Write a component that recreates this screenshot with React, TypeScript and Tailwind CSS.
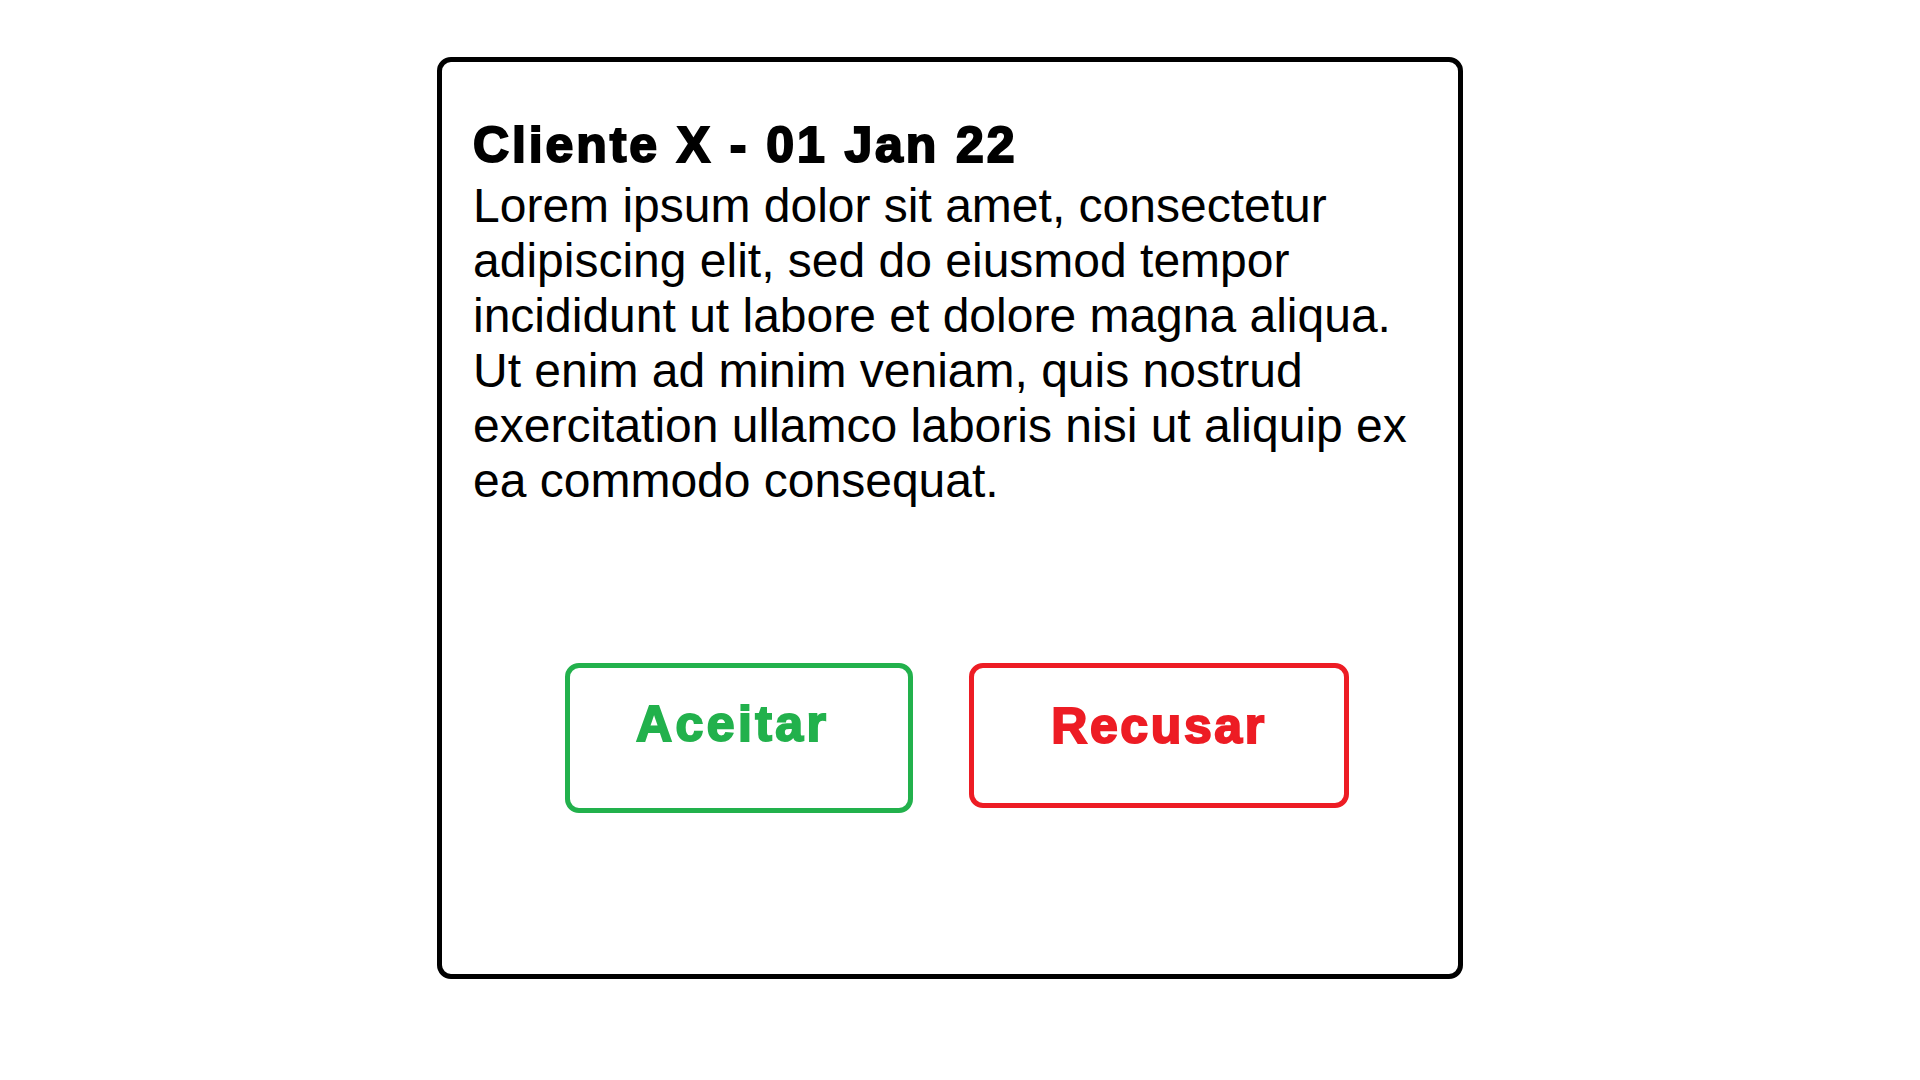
import React from 'react';

const App: React.FC = () => {
  return (
    <div className="min-h-screen w-full bg-white font-['Liberation_Sans',Arial,sans-serif] text-black overflow-hidden">
      <div className="pt-[57px] pl-[437px]">
        {/* Card */}
        <div className="w-[1026px] h-[922px] border-[5px] border-black rounded-[14px] pl-[31px] pt-[55px]">
          <h1 className="text-[50px] leading-[57px] font-bold tracking-[2.9px] [-webkit-text-stroke:2px_currentColor]">
            Cliente X - 01 Jan 22
          </h1>
          <p className="mt-[4px] w-[945px] text-[48px] leading-[55px]">
            Lorem ipsum dolor sit amet, consectetur adipiscing elit, sed do eiusmod tempor incididunt ut labore et dolore magna aliqua. Ut enim ad minim veniam, quis nostrud exercitation ullamco laboris nisi ut aliquip ex ea commodo consequat.
          </p>

          {/* Actions */}
          <div className="mt-[155px] ml-[92px] flex items-start gap-[56px]">
            <button className="w-[348px] h-[150px] border-[5px] border-[#22b14c] rounded-[14px] flex items-start pl-[66px] pt-[28px]">
              <span className="text-[50px] leading-[57px] font-bold tracking-[3.4px] text-[#22b14c] [-webkit-text-stroke:2px_currentColor]">
                Aceitar
              </span>
            </button>
            <button className="w-[380px] h-[145px] border-[5px] border-[#ed1c24] rounded-[14px] flex items-start justify-center pt-[30px]">
              <span className="text-[50px] leading-[57px] font-bold tracking-[2.6px] text-[#ed1c24] [-webkit-text-stroke:2px_currentColor]">
                Recusar
              </span>
            </button>
          </div>
        </div>
      </div>
    </div>
  );
};

export default App;
